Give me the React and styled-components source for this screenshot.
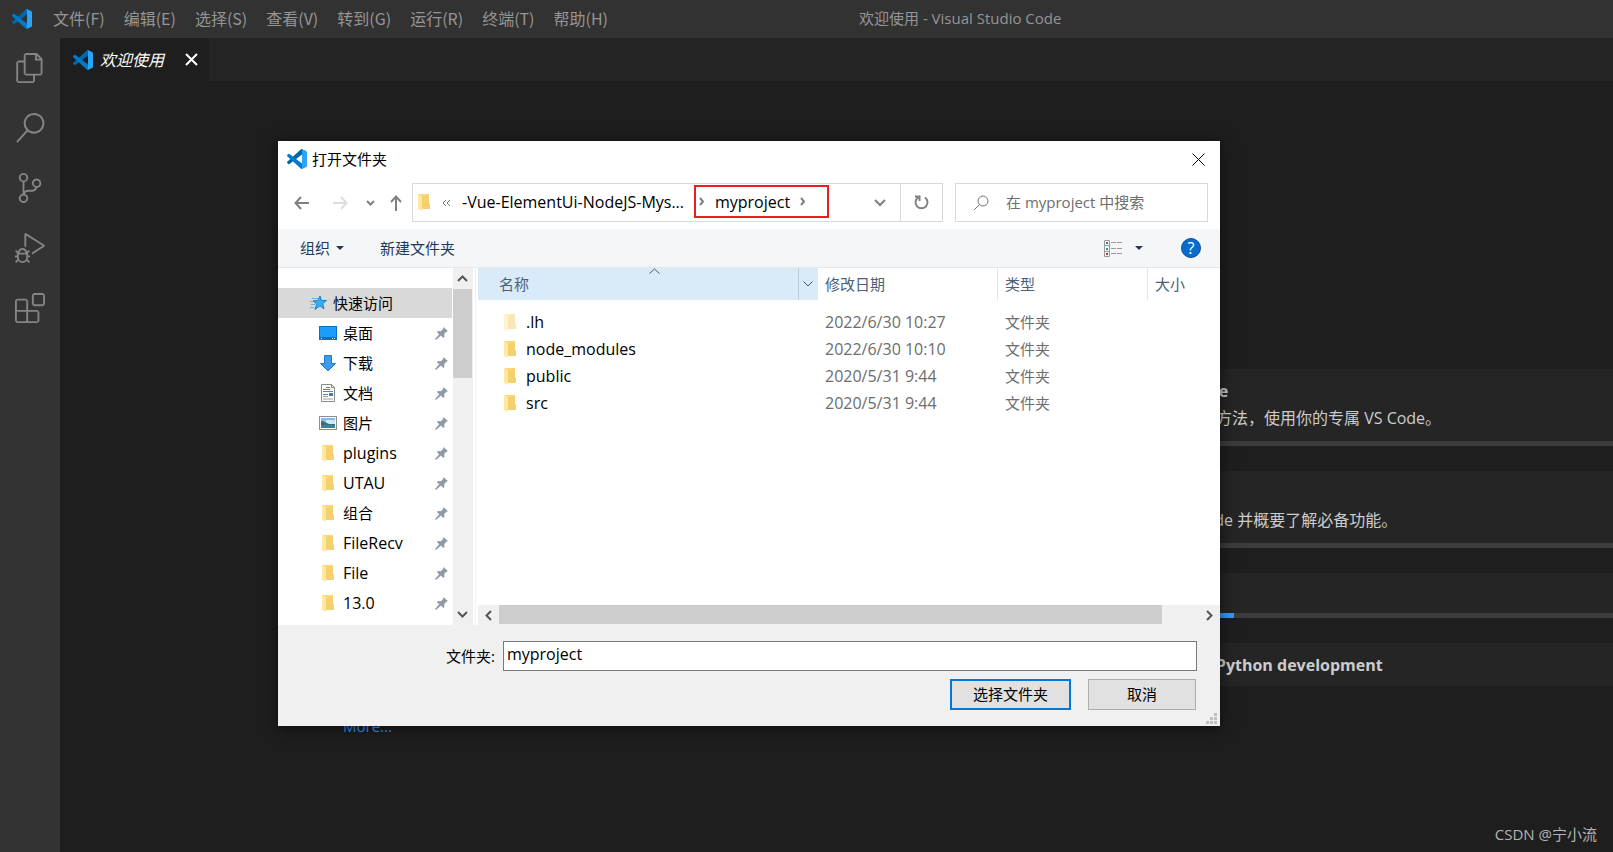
import React, { useState } from 'react';
import styled, { createGlobalStyle } from 'styled-components';
import {
  VscFiles,
  VscSearch,
  VscSourceControl,
  VscDebugAlt,
  VscExtensions
} from 'react-icons/vsc';

const menus = [
  '文件(F)',
  '编辑(E)',
  '选择(S)',
  '查看(V)',
  '转到(G)',
  '运行(R)',
  '终端(T)',
  '帮助(H)'
];

const activities = [
  { label: '资源管理器', Icon: VscFiles },
  { label: '搜索', Icon: VscSearch },
  { label: '源代码管理', Icon: VscSourceControl },
  { label: '运行和调试', Icon: VscDebugAlt },
  { label: '扩展', Icon: VscExtensions }
];

const walkthroughs = [
  {
    title: '从此处开始 VS Code',
    text: '发现最佳的自定义方法，使用你的专属 VS Code。',
    progress: 0
  },
  {
    title: '了解基础知识',
    text: '立即跳转到 VS Code 并概要了解必备功能。',
    progress: 0
  },
  { title: '提高工作效率', progress: 33 },
  { title: 'Get started with Python development' }
];

const files = [
  { name: '.lh', date: '2022/6/30 10:27', hidden: true },
  { name: 'node_modules', date: '2022/6/30 10:10' },
  { name: 'public', date: '2020/5/31 9:44' },
  { name: 'src', date: '2020/5/31 9:44' }
];

const CodeLogo = ({ size = 20 }) => (
  <svg width={size} height={size} viewBox="0 0 100 100" aria-hidden="true">
    <path
      fill="#0065A9"
      d="M96.46 10.8 75.86.88C73.47-.27 70.62.21 68.75 2.08L1.3 63.58c-1.81 1.66-1.81 4.51 0 6.17l5.51 5c1.49 1.35 3.72 1.45 5.32.24l81.23-61.62C96.09 11.3 100 13.25 100 16.67v-.24c0-2.4-1.38-4.59-3.54-5.63Z"
    />
    <path
      fill="#007ACC"
      d="m96.46 89.2-20.6 9.92c-2.39 1.15-5.24.67-7.11-1.2L1.3 36.42c-1.81-1.66-1.81-4.51 0-6.17l5.51-5c1.49-1.35 3.72-1.45 5.32-.24l81.23 61.62c2.73 2.07 6.64.12 6.64-3.3v.24c0 2.4-1.38 4.59-3.54 5.63Z"
    />
    <path
      fill="#2BA4F5"
      d="M75.86 99.13c-2.39 1.14-5.24.66-7.11-1.21C71.06 100.22 75 98.59 75 95.33V4.67c0-3.26-3.94-4.89-6.25-2.59 1.87-1.87 4.72-2.35 7.11-1.21l20.6 9.91A6.25 6.25 0 0 1 100 16.41v67.18c0 2.4-1.38 4.59-3.54 5.63l-20.6 9.91Z"
    />
  </svg>
);

const FolderIcon = ({ faded }) => (
  <svg width="13" height="17" viewBox="0 0 13 17" opacity={faded ? 0.5 : 1} aria-hidden="true">
    <path fill="#f8da7c" d="M1 0h10v9l1 1v5H3L1 13Z" />
    <path fill="#f0cb62" d="M4 3l7-3v9l1 1v5H4Z" opacity=".55" />
    <path fill="#ffe8a2" d="M0 0l4 2.5V14l-.5 3L0 15Z" />
  </svg>
);

const PinIcon = () => (
  <svg width="13" height="13" viewBox="0 0 13 13" aria-hidden="true">
    <path
      fill="#8e9aa5"
      d="M8.5 0 13 4.3l-1.6.4-2.2 2.4.2 3-1 1-2.5-2.5L1 13 0 12l4.2-4.8L1.900 4.900l1-1 3 .3 2.300-2.400Z"
    />
  </svg>
);

const StarIcon = () => (
  <svg width="18" height="17" viewBox="0 0 18 17" aria-hidden="true">
    <path stroke="#62b4ea" d="M2 3.5h6M0 6.5h5M1 9.5h4M0 12.5h4" />
    <path
      fill="#36aef2"
      stroke="#1583cf"
      d="m10 1 1.500 4.500h5L12.700 8.600l1.300 5.400-4-3.200L5 14.600l1.600-5.600L3 5.900l4.800-.3Z"
    />
  </svg>
);

const DesktopIcon = () => (
  <svg width="18" height="14" viewBox="0 0 18 14" aria-hidden="true">
    <rect x=".5" y=".5" width="17" height="13" fill="#1a9dfb" stroke="#0a70c0" />
    <path fill="#0a70c0" d="M0 11h18v3H0z" />
    <path stroke="#fff" d="M2 12.500h1M13 12.500h1M15 12.500h1" />
  </svg>
);

const DownloadIcon = () => (
  <svg width="18" height="17" viewBox="0 0 18 17" aria-hidden="true">
    <path fill="#3c9bea" stroke="#2179c6" d="M5.500.500h7v8h4L9 16 1.500 8.500h4Z" />
  </svg>
);

const DocumentIcon = () => (
  <svg width="18" height="18" viewBox="0 0 18 18" aria-hidden="true">
    <path fill="#fff" stroke="#8a8a8a" d="M2.500.500h10l3 3v14h-13Z" />
    <path fill="none" stroke="#8a8a8a" d="M12.500.500v3h3" />
    <path stroke="#2a8fdc" d="M7 3.500h4M4 5.500h7M4 7.500h10M4 10.500h5" />
    <path stroke="#9a9a9a" d="M4 12.500h5M4 15h10" />
    <path fill="#3d7fae" d="M10 9h4v3h-4z" />
  </svg>
);

const PictureIcon = () => (
  <svg width="18" height="14" viewBox="0 0 18 14" aria-hidden="true">
    <rect x=".5" y=".5" width="17" height="13" fill="#fff" stroke="#8f8f8f" />
    <path fill="#7dbcf0" d="M2 2h14v6H2z" />
    <path fill="#cfe9f7" d="M7 4h9v4H7z" />
    <path fill="#3d6f65" d="M2 5c3 0 5 2 8 3h6v1H2Z" />
    <path fill="#3a7fb0" d="M2 9h14v3H2z" />
  </svg>
);

const Glyph = ({ d, width = 10, height = 10, color = '#555', stroke = 2 }) => (
  <svg width={width} height={height} viewBox={`0 0 ${width} ${height}`} aria-hidden="true">
    <path d={d} fill="none" stroke={color} strokeWidth={stroke} />
  </svg>
);

const Caret = () => (
  <svg width="8" height="4" viewBox="0 0 8 4" aria-hidden="true">
    <path fill="#1e395b" d="M0 0h8L4 4Z" />
  </svg>
);

const ViewIcon = () => (
  <svg width="19" height="17" viewBox="0 0 19 17" aria-hidden="true">
    <path
      fill="none"
      stroke="#9a9a9a"
      d="M.500.500h5v16h-5ZM.500 5.500h5M.500 11.500h5M7 2.500h5M13 2.500h5M7 8.500h5M13 8.500h5M7 13.500h5M13 13.500h5"
    />
    <path fill="#3b78b5" d="M2 2h2v2H2z" />
    <path fill="#4b8b6c" d="M2 8h2v2H2z" />
    <path fill="#d0342c" d="M2 13h2v2H2z" />
  </svg>
);

const places = [
  { name: '桌面', Icon: DesktopIcon },
  { name: '下载', Icon: DownloadIcon },
  { name: '文档', Icon: DocumentIcon },
  { name: '图片', Icon: PictureIcon },
  { name: 'plugins', Icon: FolderIcon, latin: true },
  { name: 'UTAU', Icon: FolderIcon, latin: true },
  { name: '组合', Icon: FolderIcon },
  { name: 'FileRecv', Icon: FolderIcon, latin: true },
  { name: 'File', Icon: FolderIcon, latin: true },
  { name: '13.0', Icon: FolderIcon, latin: true }
];

const OpenFolderDialog = () => {
  const [folder, setFolder] = useState('myproject');
  const [query, setQuery] = useState('');

  return (
    <Dialog role="dialog" aria-label="打开文件夹">
      <DialogTitle>
        <CodeLogo />
        <span>打开文件夹</span>
        <DialogClose aria-label="关闭">
          <Glyph d="M.5.5l12 12M12.5.5l-12 12" width={13} height={13} color="#000" stroke={1} />
        </DialogClose>
      </DialogTitle>

      <NavRow>
        <NavArrows>
          <IconButton aria-label="后退">
            <Glyph d="M7 1L1.500 7L7 13M2 7h13" width={15} height={14} color="#808080" />
          </IconButton>
          <IconButton aria-label="前进">
            <Glyph d="M8 1L13.500 7L8 13M0 7h13" width={15} height={14} color="#ddd" />
          </IconButton>
          <IconButton aria-label="最近浏览的位置">
            <Glyph d="M1 1l3.500 3.500L8 1" width={9} height={6} color="#808080" />
          </IconButton>
          <IconButton aria-label="上移">
            <Glyph d="M1 7l5-5.500L11 7M6 2v14" width={12} height={16} color="#808080" />
          </IconButton>
        </NavArrows>
        <AddressBar>
          <FolderIcon />
          <Overflow>
            <Glyph d="M4 1L1 4l3 3M8 1L5 4l3 3" width={9} height={8} color="#777" stroke={1} />
          </Overflow>
          <Crumb>-Vue-ElementUi-NodeJS-Mys...</Crumb>
          <MarkedCrumb>
            <Glyph d="M1 1l3 3.500L1 8" width={6} height={9} color="#808080" />
            <button>myproject</button>
            <Glyph d="M1 1l3 3.500L1 8" width={6} height={9} color="#808080" />
          </MarkedCrumb>
          <AddressDrop aria-label="以前的位置">
            <Glyph d="M1 1l5 5l5-5" width={12} height={8} color="#808080" />
          </AddressDrop>
          <Refresh aria-label="刷新">
            <Glyph
              d="M4 2.500A6 6 0 1 0 11 2.500M1 1.500h4.500v4.500"
              width={15}
              height={15}
              color="#808080"
            />
          </Refresh>
        </AddressBar>
        <SearchBox>
          <Glyph
            d="M15 6a5 5 0 1 1-10 0a5 5 0 1 1 10 0M6.500 9.500L1 15"
            width={16}
            height={16}
            color="#777"
            stroke={1}
          />
          <input
            aria-label="搜索"
            placeholder="在 myproject 中搜索"
            value={query}
            onChange={(e) => setQuery(e.target.value)}
          />
        </SearchBox>
      </NavRow>

      <Toolbar>
        <ToolButton>
          组织
          <Caret />
        </ToolButton>
        <ToolButton>新建文件夹</ToolButton>
        <ToolGroup>
          <IconButton aria-label="更改视图">
            <ViewIcon />
          </IconButton>
          <IconButton aria-label="更多选项">
            <Caret />
          </IconButton>
          <HelpButton aria-label="帮助">?</HelpButton>
        </ToolGroup>
      </Toolbar>

      <Browser>
        <Places aria-label="导航窗格">
          <QuickAccess href="#quick">
            <StarIcon />
            快速访问
          </QuickAccess>
          {places.map(({ name, Icon, latin }) => (
            <Place key={name} href="#place" $latin={latin}>
              <PlaceIcon>
                <Icon />
              </PlaceIcon>
              <span>{name}</span>
              <PinIcon />
            </Place>
          ))}
        </Places>
        <VerticalScroll>
          <IconButton aria-label="向上滚动">
            <Glyph d="M1 6l4.500-4.500L10 6" width={11} height={8} />
          </IconButton>
          <VerticalThumb />
          <IconButton aria-label="向下滚动">
            <Glyph d="M1 1l4.500 4.500L10 1" width={11} height={8} />
          </IconButton>
        </VerticalScroll>
        <ListPane>
          <FileTable>
            <colgroup>
              <col width="320" />
              <col width="20" />
              <col width="179" />
              <col width="150" />
              <col />
            </colgroup>
            <thead>
              <tr>
                <NameHead>
                  名称
                  <SortMark>
                    <Glyph d="M1.500 5.500l5-4.500l5 4.500" width={13} height={6} stroke={1} />
                  </SortMark>
                </NameHead>
                <DropHead aria-label="筛选">
                  <Glyph d="M.500.500l4.500 4.500L9.500.500" width={10} height={6} stroke={1} />
                </DropHead>
                <Head>修改日期</Head>
                <Head $divided>类型</Head>
                <Head $divided>大小</Head>
              </tr>
            </thead>
            <tbody>
              {files.map(({ name, date, hidden }) => (
                <tr key={name}>
                  <NameCell colSpan={2} $latin>
                    <FolderIcon faded={hidden} />
                    <span>{name}</span>
                  </NameCell>
                  <Cell $latin>{date}</Cell>
                  <Cell>文件夹</Cell>
                  <Cell />
                </tr>
              ))}
            </tbody>
          </FileTable>
          <HorizontalScroll>
            <IconButton aria-label="向左滚动">
              <Glyph d="M6 1L1.500 5.500L6 10" width={8} height={11} />
            </IconButton>
            <HorizontalTrack>
              <HorizontalThumb />
            </HorizontalTrack>
            <IconButton aria-label="向右滚动">
              <Glyph d="M1 1l4.500 4.500L1 10" width={8} height={11} />
            </IconButton>
          </HorizontalScroll>
        </ListPane>
      </Browser>

      <DialogFooter>
        <FolderField>
          <label htmlFor="folder">文件夹:</label>
          <input id="folder" value={folder} onChange={(e) => setFolder(e.target.value)} />
        </FolderField>
        <DialogActions>
          <DialogButton $primary>选择文件夹</DialogButton>
          <DialogButton>取消</DialogButton>
        </DialogActions>
        <Grip>
          <svg width="11" height="11" viewBox="0 0 11 11" aria-hidden="true">
            <path
              fill="#bfbfbf"
              d="M8 0h3v3H8zM8 4h3v3H8zM4 4h3v3H4zM8 8h3v3H8zM4 8h3v3H4zM0 8h3v3H0z"
            />
          </svg>
        </Grip>
      </DialogFooter>
    </Dialog>
  );
};

const App = () => (
  <Window>
    <GlobalStyle />
    <TitleBar>
      <CodeLogo />
      <MenuBar>
        {menus.map((menu) => (
          <MenuItem key={menu}>{menu}</MenuItem>
        ))}
      </MenuBar>
      <WindowTitle>欢迎使用 - Visual Studio Code</WindowTitle>
    </TitleBar>
    <Workbench>
      <ActivityBar>
        {activities.map(({ label, Icon }) => (
          <ActivityButton key={label} aria-label={label}>
            <Icon size={30} />
          </ActivityButton>
        ))}
      </ActivityBar>
      <Editor>
        <TabStrip>
          <Tab>
            <CodeLogo />
            <em>欢迎使用</em>
            <IconButton aria-label="关闭">
              <Glyph d="M1 1l11 11M12 1L1 12" width={13} height={13} color="#fff" />
            </IconButton>
          </Tab>
        </TabStrip>
        <Welcome>
          <StartColumn>
            <MoreLink href="#more">More...</MoreLink>
          </StartColumn>
          <Walkthroughs>
            {walkthroughs.map(({ title, text, progress }) => (
              <Card key={title}>
                <CardTitle>{title}</CardTitle>
                {text && <CardText>{text}</CardText>}
                {progress !== undefined && (
                  <Progress>
                    <div style={{ width: `${progress}%` }} />
                  </Progress>
                )}
              </Card>
            ))}
          </Walkthroughs>
        </Welcome>
      </Editor>
    </Workbench>
    <OpenFolderDialog />
    <Watermark>CSDN @宁小流</Watermark>
  </Window>
);

export default App;

const GlobalStyle = createGlobalStyle`
  body {
    margin: 0;
    background: #1e1e1e;
  }

  * {
    box-sizing: border-box;
  }

  button,
  input {
    margin: 0;
    padding: 0;
    border: 0;
    background: none;
    color: inherit;
    font: inherit;
  }

  a {
    color: inherit;
    text-decoration: none;
  }

  svg {
    display: block;
    flex: none;
  }
`;

const Window = styled.div`
  position: relative;
  display: flex;
  flex-direction: column;
  min-height: 100vh;
  overflow: hidden;
  color: #ccc;
  font-family: 'Open Sans', 'Noto Sans CJK SC', sans-serif;
  font-size: 15px;
  line-height: 20px;
  white-space: nowrap;
`;

const TitleBar = styled.header`
  display: flex;
  align-items: center;
  height: 38px;
  padding-left: 12px;
  background: #323233;
  color: #959595;
`;

const MenuBar = styled.nav`
  display: flex;
  flex: 1;
  gap: 19px;
  padding: 0 0 2px 21px;
  font-family: 'Noto Sans CJK SC', sans-serif;
  font-size: 16px;
`;

const MenuItem = styled.button`
  padding: 0;
`;

const WindowTitle = styled.div`
  flex: 1;
  padding: 0 0 2px 52px;
`;

const Workbench = styled.div`
  display: flex;
  flex: 1;
`;

const ActivityBar = styled.nav`
  display: flex;
  flex-direction: column;
  width: 60px;
  background: #333;
  color: #858585;
`;

const ActivityButton = styled.button`
  display: flex;
  align-items: center;
  justify-content: center;
  height: 60px;
`;

const Editor = styled.main`
  flex: 1;
  min-width: 0;
  background: #1e1e1e;
`;

const TabStrip = styled.div`
  display: flex;
  height: 43px;
  background: #252526;
`;

const IconButton = styled.button`
  display: flex;
  align-items: center;
  justify-content: center;
`;

const Tab = styled.div`
  display: flex;
  align-items: center;
  width: 149px;
  padding: 0 11px 0 13px;
  background: #1e1e1e;
  color: #fff;
  font-size: 16px;

  em {
    flex: 1;
    padding-left: 7px;
  }
`;

const Welcome = styled.div`
  display: grid;
  grid-template-columns: 988px 1fr;
  align-items: start;
`;

const StartColumn = styled.section`
  padding: 635px 0 0 283px;
`;

const MoreLink = styled.a`
  color: #3794ff;
  font-size: 15px;
`;

const Walkthroughs = styled.section`
  display: flex;
  flex-direction: column;
  gap: 25px;
  padding-top: 288px;
`;

const Card = styled.article`
  min-height: 43px;
  padding-top: 10px;
  background: #252526;
`;

const CardTitle = styled.h3`
  margin: 0;
  padding: 0 0 6px 33px;
  font-size: 16px;
  line-height: 24px;
  font-weight: 700;
`;

const CardText = styled.p`
  margin: 0;
  padding: 0 0 14px 40px;
  font-size: 16px;
  line-height: 18px;
`;

const Progress = styled.div`
  height: 5px;
  background: #3c3c3c;

  div {
    height: 5px;
    background: #3794ff;
  }
`;

const Dialog = styled.section`
  position: absolute;
  top: 141px;
  left: 278px;
  width: 942px;
  background: #fff;
  color: #000;
  box-shadow: 0 2px 14px rgba(0, 0, 0, 0.6);
`;

const DialogTitle = styled.header`
  display: flex;
  align-items: center;
  height: 38px;
  padding: 0 15px 2px 9px;
  gap: 5px;
`;

const DialogClose = styled(IconButton)`
  margin-left: auto;
`;

const NavRow = styled.div`
  display: flex;
  padding: 4px 12px 7px 16px;
`;

const NavArrows = styled.div`
  display: grid;
  grid-template-columns: 39px 33px 24px 12px;
  align-items: center;
  justify-items: start;
  margin-right: 10px;
`;

const AddressBar = styled.div`
  display: flex;
  flex: 1;
  align-items: center;
  height: 39px;
  padding-left: 5px;
  border: 1px solid #d9d9d9;
`;

const Overflow = styled(IconButton)`
  width: 31px;
`;

const Crumb = styled.button`
  width: 232px;
  padding-bottom: 2px;
  font-size: 16px;
  text-align: left;
`;

const MarkedCrumb = styled.div`
  display: flex;
  align-items: center;
  justify-content: space-between;
  width: 135px;
  height: 33px;
  margin-bottom: 2px;
  padding: 0 21px 0 3px;
  border: 2px solid #ed1c24;
  font-size: 16px;
`;

const AddressDrop = styled(IconButton)`
  flex: 1;
  height: 37px;
  padding-left: 30px;
  border-right: 1px solid #d9d9d9;
`;

const Refresh = styled(IconButton)`
  width: 41px;
`;

const SearchBox = styled.div`
  display: flex;
  align-items: center;
  width: 253px;
  margin-left: 12px;
  padding-left: 17px;
  border: 1px solid #d9d9d9;

  input {
    flex: 1;
    min-width: 0;
    padding: 0 0 2px 17px;
    outline: none;
  }

  input::placeholder {
    color: #6d6d6d;
    opacity: 1;
  }
`;

const Toolbar = styled.div`
  display: flex;
  align-items: center;
  height: 39px;
  padding: 0 19px 0 22px;
  gap: 36px;
  border-bottom: 1px solid #e5e6e8;
  background: #f5f6f7;
  color: #1e395b;
`;

const ToolButton = styled.button`
  display: flex;
  align-items: center;
  gap: 6px;
`;

const ToolGroup = styled.div`
  display: flex;
  align-items: center;
  margin-left: auto;
  gap: 12px;
`;

const HelpButton = styled.button`
  width: 20px;
  height: 20px;
  margin-left: 26px;
  border: 1px solid #0a4f94;
  border-radius: 10px;
  background: #0a6bce;
  color: #fff;
  font-size: 16px;
  line-height: 18px;
`;

const Browser = styled.div`
  display: flex;
  height: 357px;
`;

const Places = styled.nav`
  width: 175px;
  padding-top: 20px;
  overflow: hidden;
`;

const Place = styled.a`
  display: flex;
  align-items: center;
  height: 30px;
  margin-right: 1px;
  padding: 0 4px 0 41px;
  font-size: ${({ $latin }) => ($latin ? '16px' : '15px')};

  span {
    flex: 1;
  }
`;

const PlaceIcon = styled.div`
  display: flex;
  justify-content: center;
  width: 18px;
  margin-right: 6px;
`;

const QuickAccess = styled(Place)`
  gap: 5px;
  padding-left: 32px;
  background: #d9d9d9;
`;

const VerticalScroll = styled.div`
  display: flex;
  flex-direction: column;
  width: 20px;
  background: #f0f0f0;

  button {
    width: 19px;
    height: 21px;
  }

  button:last-child {
    margin-top: auto;
  }
`;

const VerticalThumb = styled.div`
  width: 19px;
  height: 89px;
  background: #cdcdcd;
`;

const ListPane = styled.div`
  display: flex;
  flex: 1;
  flex-direction: column;
  justify-content: space-between;
  margin-left: 2px;
  padding-left: 2px;
  border-left: 1px solid #f0f0f0;
`;

const FileTable = styled.table`
  width: 100%;
  table-layout: fixed;
  border-collapse: separate;
  border-spacing: 0;

  tbody::before {
    display: block;
    height: 8px;
    content: '';
  }
`;

const Head = styled.th`
  height: 32px;
  padding: 0 0 0 7px;
  border-left: ${({ $divided }) => ($divided ? '1px solid #e5e5e5' : '0')};
  color: #4c607a;
  font-weight: 400;
  text-align: left;
`;

const NameHead = styled(Head)`
  position: relative;
  padding-left: 21px;
  background: #d9ebf9;
`;

const DropHead = styled(Head)`
  padding-left: 4px;
  border-left: 1px solid #b9cfe0;
  background: #d9ebf9;
`;

const SortMark = styled.span`
  position: absolute;
  top: 0;
  left: 170px;
`;

const Cell = styled.td`
  height: 27px;
  padding: 0 0 0 8px;
  color: #6d6d6d;
  font-size: ${({ $latin }) => ($latin ? '16px' : '15px')};

  &:nth-child(2) {
    padding-left: 7px;
  }
`;

const NameCell = styled(Cell)`
  padding-left: 26px;
  color: #000;

  svg,
  span {
    display: inline-block;
    vertical-align: middle;
  }

  span {
    padding-left: 9px;
  }
`;

const HorizontalScroll = styled.div`
  display: flex;
  height: 20px;
  background: #f0f0f0;

  button {
    width: 21px;
  }
`;

const HorizontalTrack = styled.div`
  flex: 1;
`;

const HorizontalThumb = styled.div`
  width: 663px;
  height: 19px;
  background: #cdcdcd;
`;

const DialogFooter = styled.footer`
  position: relative;
  padding: 16px 23px 16px 168px;
  background: #f0f0f0;
`;

const FolderField = styled.div`
  display: flex;
  align-items: center;
  gap: 8px;

  input {
    flex: 1;
    height: 30px;
    padding: 0 3px 4px;
    border: 1px solid #7a7a7a;
    background: #fff;
    font-size: 16px;
  }
`;

const DialogActions = styled.div`
  display: flex;
  justify-content: flex-end;
  gap: 17px;
  padding: 8px 1px 0 0;
`;

const DialogButton = styled.button`
  width: ${({ $primary }) => ($primary ? '121px' : '108px')};
  height: 31px;
  padding-bottom: 2px;
  border: ${({ $primary }) => ($primary ? '2px solid #0078d7' : '1px solid #adadad')};
  background: #e1e1e1;
`;

const Grip = styled.div`
  position: absolute;
  right: 3px;
  bottom: 2px;
`;

const Watermark = styled.div`
  position: absolute;
  right: 16px;
  bottom: 8px;
  color: #b4b4b4;
  font-size: 15px;
`;
